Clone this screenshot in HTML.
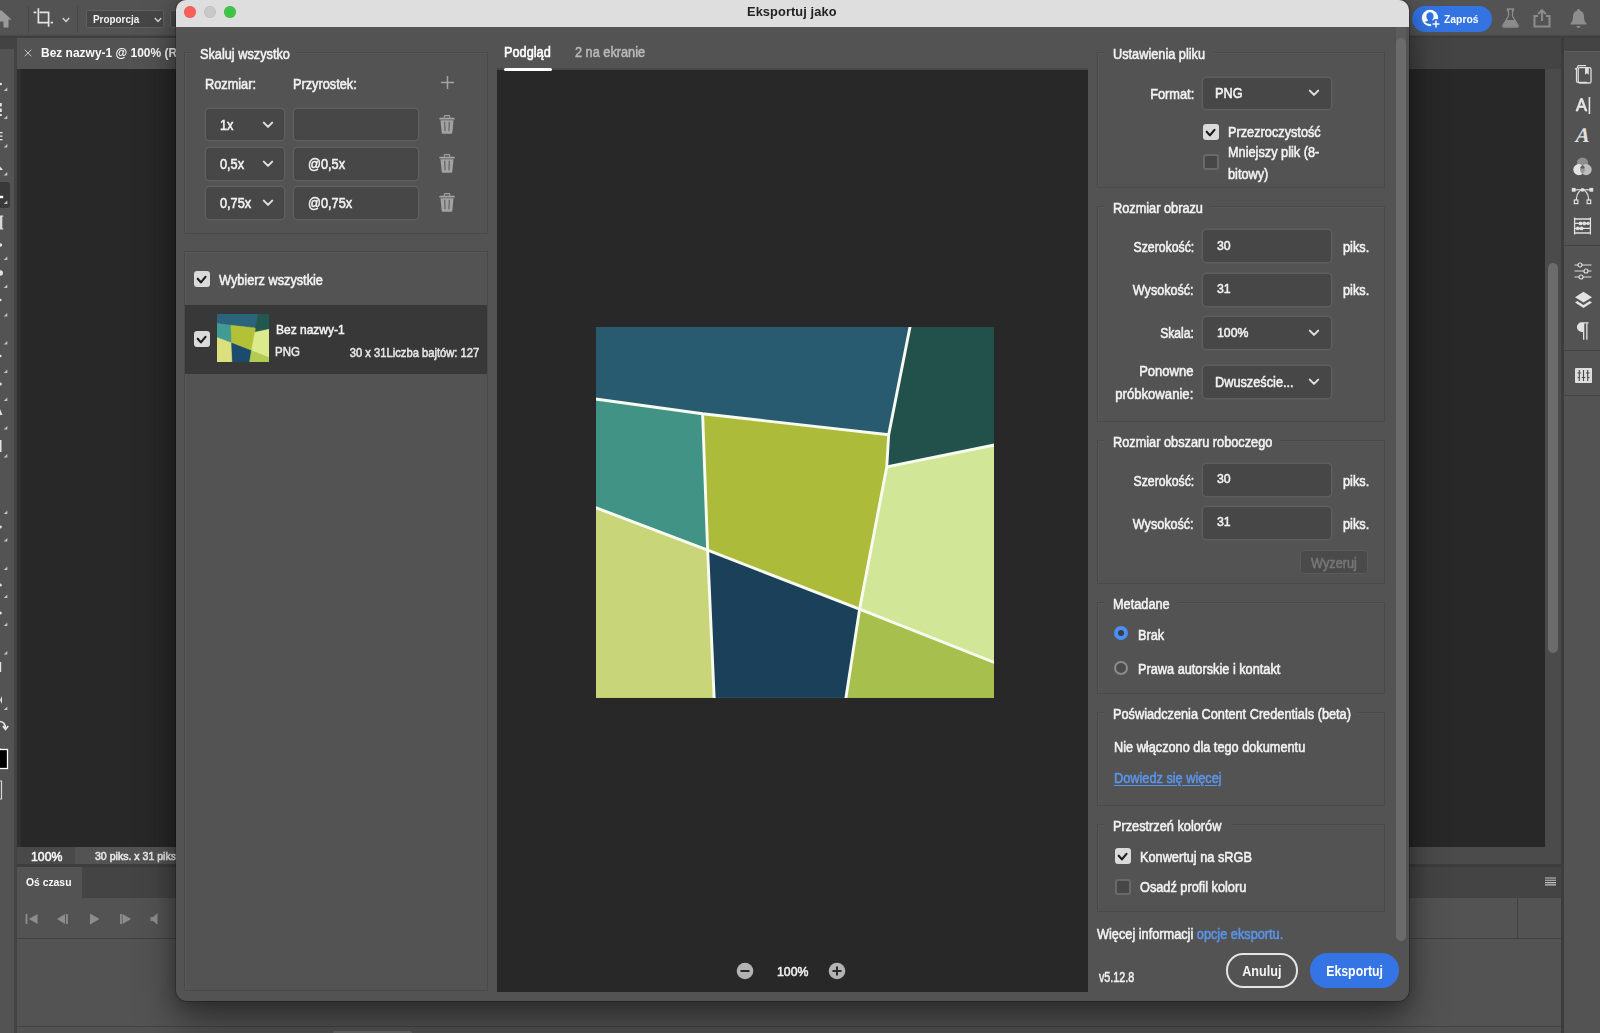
<!DOCTYPE html>
<html lang="pl">
<head>
<meta charset="utf-8">
<title>Eksportuj jako</title>
<style>
*{box-sizing:border-box;margin:0;padding:0}
html,body{width:1600px;height:1033px;overflow:hidden;background:#535353;font-family:"Liberation Sans",sans-serif;color:#f0f0f0}
.a{position:absolute}
.t{position:absolute;white-space:nowrap;font-size:14px;line-height:16px;transform:scaleX(.91);transform-origin:left center;color:#f2f2f2;-webkit-text-stroke:.55px currentColor}
.r{transform-origin:right center;text-align:right}
.b{font-weight:700;-webkit-text-stroke:0}
/* ---------- photoshop background ---------- */
#ps{position:absolute;left:0;top:0;width:1600px;height:1033px;overflow:hidden}
/* ---------- dialog ---------- */
#dlg{position:absolute;left:176px;top:0;width:1233px;height:1001px;background:#535353;border-radius:10px 10px 11px 11px;
 box-shadow:0 0 0 1px rgba(0,0,0,.2),0 22px 40px 0 rgba(0,0,0,.4),0 3px 16px 2px rgba(0,0,0,.2)}
#tb{position:absolute;left:0;top:0;width:100%;height:27px;background:#dedede;border-radius:10px 10px 0 0}
.tl{position:absolute;top:6px;width:12px;height:12px;border-radius:50%}
.fs{position:absolute;border:1px solid #4a4a4a;box-shadow:inset 1px 1px 0 rgba(255,255,255,.03)}
.lg{position:absolute;background:#535353;height:16px}
.box{position:absolute;background:#474747;box-shadow:0 0 0 1.500px #5e5e5e;border-radius:3.500px}
.cb{position:absolute;width:15.700px;height:16.400px;border-radius:3px}
.cb.on{background:#dadada}
.cb.off{background:#474747;border:2px solid #696969}
</style>
</head>
<body>
<div id="ps">
<!-- top options bar -->
<div class="a" style="left:0;top:0;width:1600px;height:37px;background:#535353"></div>
<div class="a" style="left:0;top:33.500px;width:1600px;height:2.500px;background:linear-gradient(#535353,#474747)"></div>
<div class="a" style="left:0;top:36px;width:1600px;height:2px;background:#3f3f3f"></div>
<!-- home icon (cropped) -->
<svg class="a" style="left:-10px;top:9px" width="22" height="20" viewBox="0 0 22 20"><path d="M11 1 L21.5 10.5 H18.5 V18.5 H13.5 V12.5 H8.5 V18.5 H3.5 V10.5 H0.5 Z" fill="#9b9b9b"/></svg>
<div class="a" style="left:28px;top:6px;width:1px;height:27px;background:#474747"></div>
<!-- crop icon -->
<svg class="a" style="left:33px;top:7px" width="21" height="21" viewBox="0 0 21 21" fill="none" stroke="#e4e4e4" stroke-width="1.700"><path d="M.6 5.400 H3.400"/><path d="M5.400 1.300 V15.600 H15.800"/><path d="M6.600 5.400 H15.600 V19.700"/><path d="M17.600 15.600 H20"/></svg>
<svg class="a" style="left:62px;top:17px" width="8" height="6" viewBox="0 0 8 6" fill="none" stroke="#d8d8d8" stroke-width="1.4"><path d="M.8 1 L4 4.4 L7.2 1"/></svg>
<div class="a" style="left:77px;top:6px;width:1px;height:27px;background:#474747"></div>
<div class="a" style="left:86px;top:10px;width:78px;height:18px;background:#464646;border:1px solid #606060;border-radius:2px"></div>
<div class="t b" style="left:93px;top:11px;font-size:11px;color:#f2f2f2;transform:scaleX(.9)">Proporcja</div>
<svg class="a" style="left:154px;top:16.5px" width="8" height="6" viewBox="0 0 8 6" fill="none" stroke="#d8d8d8" stroke-width="1.4"><path d="M.8 1 L4 4.4 L7.2 1"/></svg>
<div class="a" style="left:170px;top:10px;width:20px;height:18px;background:#464646;border:1px solid #606060;border-radius:2px"></div>
<!-- invite button + icons -->
<div class="a" style="left:1412px;top:6px;width:80px;height:26px;border-radius:13px;background:#3373e2"></div>
<svg class="a" style="left:1421px;top:9px" width="20" height="20" viewBox="0 0 20 20"><circle cx="9" cy="9" r="8.2" fill="#fff"/><path d="M9 3.2 c2.4 0 3.6 1.8 3.6 4 c0 1.700 -.8 3.100 -1.700 3.800 c.3 1 1.800 1.400 3.300 2.100 a8.200 8.200 0 0 1 -10.400 0 c1.500 -.7 3 -1.100 3.300 -2.100 c-.9 -.7 -1.700 -2.100 -1.700 -3.800 c0 -2.200 1.200 -4 3.600 -4z" fill="#3373e2"/><circle cx="15" cy="15" r="5" fill="#3373e2"/><path d="M15 11.600 v6.800 M11.600 15 h6.800" stroke="#fff" stroke-width="1.500"/></svg>
<div class="t b" style="left:1444px;top:10.500px;font-size:11.500px;color:#fff;transform:scaleX(.9)">Zaproś</div>
<svg class="a" style="left:1502px;top:8px" width="17" height="20" viewBox="0 0 17 20"><path d="M5.500 1 h6 v1.500 h-1 v5.500 l5.700 9.500 a1 1 0 0 1 -.9 1.500 h-13.600 a1 1 0 0 1 -.9 -1.500 l5.700 -9.500 v-5.500 h-1z" fill="none" stroke="#8b8b8b" stroke-width="1.300"/><path d="M4.300 12 h8.400 l3 5.600 a.8 .8 0 0 1 -.7 1.200 h-13 a.8 .8 0 0 1 -.7 -1.200z" fill="#8b8b8b"/></svg>
<svg class="a" style="left:1533px;top:8px" width="18" height="20" viewBox="0 0 18 20" fill="none" stroke="#8b8b8b" stroke-width="2.100"><path d="M5 8 H1.500 V18.500 H16.500 V8 H13"/><path d="M9 13 V2.500 M5.200 6 L9 2.200 L12.800 6"/></svg>
<svg class="a" style="left:1570px;top:8px" width="17" height="21" viewBox="0 0 17 21"><path d="M8.500 1 c.9 0 1.500 .6 1.500 1.500 c2.800 .8 4 3.200 4 6 c0 4 1 5.500 2.500 7 v1 h-16 v-1 c1.500 -1.500 2.500 -3 2.500 -7 c0 -2.800 1.200 -5.200 4 -6 c0 -.9 .6 -1.500 1.500 -1.500z" fill="#8e8e8e"/><path d="M6.500 18 h4 a2 2 0 0 1 -4 0z" fill="#8e8e8e"/></svg>
<!-- left toolbar -->
<div class="a" style="left:0;top:38px;width:14px;height:11px;background:#434343"></div>
<div class="a" style="left:0;top:49px;width:14px;height:984px;background:#535353"></div>
<div class="a" style="left:14px;top:38px;width:3px;height:995px;background:#434343"></div>
<!-- left tool fragments -->
<div class="a" style="left:0;top:182px;width:10px;height:26px;background:#393939;border-radius:0 3px 3px 0"></div>
<svg class="a" style="left:0;top:60px" width="14" height="760" viewBox="0 0 14 760"><g fill="#c4c4c4">
<path d="M7.300 27.500 v3.600 h-3.600z"/><path d="M7.300 55.500 v3.600 h-3.600z"/><path d="M7.300 84 v3.600 h-3.600z"/><path d="M7.300 112 v3.600 h-3.600z"/><path d="M7.300 140.500 v3.600 h-3.600z"/>
<path d="M7.300 196.500 v3.600 h-3.600z"/><path d="M7.300 224.500 v3.600 h-3.600z"/><path d="M7.300 253 v3.600 h-3.600z"/><path d="M7.300 281 v3.600 h-3.600z"/><path d="M7.300 309.500 v3.600 h-3.600z"/><path d="M7.300 337.500 v3.600 h-3.600z"/><path d="M7.300 366 v3.600 h-3.600z"/><path d="M7.300 394 v3.600 h-3.600z"/>
<path d="M7.300 450.500 v3.600 h-3.600z"/><path d="M7.300 478 v3.600 h-3.600z"/><path d="M7.300 506.500 v3.600 h-3.600z"/><path d="M7.300 534.500 v3.600 h-3.600z"/><path d="M7.300 562.500 v3.600 h-3.600z"/><path d="M7.300 591 v3.600 h-3.600z"/><path d="M7.300 646.500 v3.600 h-3.600z"/>
</g><g fill="#e2e2e2">
<circle cx=".8" cy="24" r="1.200"/>
<rect x="0" y="43" width="1.800" height="3.500"/><rect x="0" y="48.500" width="1.800" height="3.500"/><rect x="0" y="54" width="1.800" height="2"/>
<rect x="0" y="72" width="2.500" height="1.300"/><rect x="0" y="75.500" width="2.500" height="1.300"/><rect x="0" y="79" width="2.500" height="1.300"/>
<path d="M0 106.500 l3 3.500 h-3z"/>
<rect x="0" y="135.800" width="3.200" height="2.400" fill="#fff"/>
<path d="M0 155.500 h3.300 v1.300 h-1 v11.400 h1 v1.300 h-3.300z" fill="#d8d8d8"/>
<circle cx=".5" cy="185" r="1.700"/><circle cx=".3" cy="213" r="2.700"/><circle cx=".3" cy="240" r="1.300"/>
<circle cx=".3" cy="296" r="1.300"/><circle cx=".3" cy="324" r="1.500"/><path d="M0 349 l2.500 6 h-2.500z"/>
<rect x="0" y="380" width="1.500" height="12"/><circle cx=".3" cy="467" r="1.500"/><circle cx=".3" cy="525" r="1.500"/><circle cx=".3" cy="553" r="1.500"/>
<rect x="0" y="602" width="1.200" height="10"/><path d="M0 640 l2 -4 v8z"/><circle cx=".3" cy="690" r="1.500"/>
</g>
<path d="M0 661.500 q5.500 .5 5.500 7.500 M2.800 666 l2.700 3.500 l2.700 -3.500" fill="none" stroke="#e6e6e6" stroke-width="1.600"/>
<rect x="-3" y="689.500" width="10.500" height="19" fill="#000" stroke="#fff" stroke-width="1.300"/>
<path d="M0 721 h1.500 v18 h-1.500" fill="none" stroke="#d8d8d8" stroke-width="1.200"/>
</svg>

<!-- doc tab bar -->
<div class="a" style="left:17px;top:38px;width:1544px;height:31px;background:#444444"></div>
<div class="a" style="left:17px;top:38px;width:200px;height:30.500px;background:#535353"></div>
<svg class="a" style="left:24px;top:49px" width="8" height="8" viewBox="0 0 8 8" stroke="#c4c4c4" stroke-width="1"><path d="M.7 .7 L7.300 7.300 M7.300 .7 L.7 7.300"/></svg>
<div class="t b" style="left:41px;top:45px;font-size:12px;color:#fafafa;transform:scaleX(.998)">Bez nazwy-1 @ 100% (RGB/8)</div>
<!-- canvas -->
<div class="a" style="left:17px;top:68.500px;width:1528px;height:778.500px;background:#282828"></div>
<div class="a" style="left:17px;top:68.500px;width:4px;height:778.500px;background:#2f2f2f"></div>
<!-- vertical scrollbar -->
<div class="a" style="left:1545px;top:68.500px;width:16px;height:795.500px;background:#4b4b4b"></div>
<div class="a" style="left:1548px;top:263px;width:10px;height:390px;border-radius:5px;background:#6b6b6b"></div>
<div class="a" style="left:1561px;top:38px;width:3px;height:995px;background:#3c3c3c"></div>
<!-- right icon column -->
<div class="a" style="left:1564px;top:38px;width:36px;height:13px;background:#444444"></div>
<div class="a" style="left:1564px;top:51px;width:36px;height:982px;background:#535353;border-top:1px solid #5d5d5d"></div>
<div class="a" style="left:1564px;top:245px;width:36px;height:1px;background:#424242"></div>
<div class="a" style="left:1564px;top:350px;width:36px;height:1px;background:#424242"></div>
<div class="a" style="left:1564px;top:395px;width:36px;height:1px;background:#424242"></div>
<!-- right icons -->
<svg class="a" style="left:1574px;top:65px" width="19" height="19" viewBox="0 0 19 19" fill="none" stroke="#dedede" stroke-width="1.300"><path d="M3.500 3.300 V2 a1.300 1.300 0 0 1 1.300 -1.300 H12"/><path d="M1.300 4.500 a1.200 1.200 0 0 1 1.200 -1.200 h0 V16 a1.300 1.300 0 0 0 1.300 1.300 H13" stroke-width="1.200"/><rect x="4.200" y="2.700" width="12.800" height="15.300" rx="1.600"/><path d="M11 3 V9.800 L12.900 8.200 L14.800 9.800 V3z" fill="#dedede" stroke="none"/></svg>
<svg class="a" style="left:1575px;top:96px" width="16" height="19" viewBox="0 0 16 19"><path d="M1 15 L5.700 2.500 H7.300 L12 15 H10.300 L9 11.400 H4 L2.700 15z M4.500 10 H8.500 L6.500 4.400z" fill="#e4e4e4" stroke="#e4e4e4" stroke-width=".9"/><rect x="13.600" y="1" width="1.600" height="17" fill="#e4e4e4"/></svg>
<div class="a" style="left:1574px;top:124px;width:18px;height:22px;font-family:'Liberation Serif',serif;font-style:italic;font-weight:700;font-size:21px;line-height:22px;color:#e0e0e0;text-align:center;transform:skewX(-3deg)">A</div>
<svg class="a" style="left:1573px;top:156.500px" width="19" height="19" viewBox="0 0 19 19"><circle cx="9.500" cy="6" r="5.600" fill="#8e8e8e"/><circle cx="5.900" cy="12.600" r="5.600" fill="#e3e3e3"/><circle cx="13.100" cy="12.600" r="5.600" fill="#bdbdbd"/><path d="M9.500 8 a5.600 5.600 0 0 1 0 9.200 a5.600 5.600 0 0 1 0 -9.200z" fill="#9a9a9a"/><path d="M9.500 8 q2 1.400 2.300 3.100 q-2.300 1.100 -4.600 0 q.3 -1.700 2.300 -3.100z" fill="#5e5e5e"/></svg>
<svg class="a" style="left:1571px;top:187px" width="23" height="18" viewBox="0 0 23 18" fill="none" stroke="#e0e0e0" stroke-width="1.200"><path d="M2.500 2.800 H20.500"/><path d="M5.200 13 C5.500 6 9 3 11.500 3 C14 3 17.500 6 17.800 13"/><rect x=".8" y=".9" width="3.800" height="3.800" fill="#e0e0e0" stroke="none"/><rect x="18.400" y=".9" width="3.800" height="3.800" fill="#e0e0e0" stroke="none"/><circle cx="11.500" cy="2.800" r="1.900" fill="#e0e0e0" stroke="none"/><rect x="3.300" y="13" width="3.600" height="3.600" fill="#535353"/><rect x="16.100" y="13" width="3.600" height="3.600" fill="#535353"/></svg>
<svg class="a" style="left:1573px;top:217px" width="19" height="18" viewBox="0 0 19 18" fill="none" stroke="#e0e0e0" stroke-width="1.300"><path d="M1.600 .5 V17.500 M17.400 .5 V17.500 M1.600 2 H17.400 M1.600 16 H17.400 M1.600 6.400 H17.400 M1.600 11.400 H17.400"/><g fill="#e0e0e0" stroke="none"><circle cx="7.500" cy="6.400" r="1.900"/><circle cx="11.300" cy="6.400" r="1.900"/><circle cx="15" cy="6.400" r="1.700"/><circle cx="4.800" cy="11.400" r="1.900"/><circle cx="8.600" cy="11.400" r="1.900"/></g></svg>
<svg class="a" style="left:1574px;top:262px" width="18" height="18" viewBox="0 0 18 18" fill="none" stroke="#dcdcdc" stroke-width="1.200"><path d="M.5 3 H4 M8 3 H17.500 M.5 9 H10 M14 9 H17.500 M.5 15 H5 M9 15 H17.500"/><circle cx="6" cy="3" r="2"/><circle cx="12" cy="9" r="2"/><circle cx="7" cy="15" r="2"/></svg>
<svg class="a" style="left:1573.500px;top:290.500px" width="19" height="19" viewBox="0 0 19 19"><path d="M9.500 .8 L18 6.200 L9.500 11.600 L1 6.200z" fill="#e2e2e2"/><path d="M3.300 10 L1 11.500 L9.500 17 L18 11.500 L15.700 10 L9.500 14z" fill="#e2e2e2"/></svg>
<svg class="a" style="left:1576px;top:322px" width="13" height="18" viewBox="0 0 13 18"><path d="M5.800 .3 H12.500 V1.600 H11.500 V17.700 H10.200 V1.600 H8.300 V17.700 H7 V10 H5.800 a4.850 4.850 0 0 1 0 -9.700z" fill="#e2e2e2"/></svg>
<svg class="a" style="left:1574.500px;top:367.500px" width="17" height="15" viewBox="0 0 17 15"><rect x="0" y="0" width="17" height="15" rx=".8" fill="#dedede"/><g stroke="#4a4a4a" stroke-width="1.100" fill="none"><path d="M4.300 2 V13 M8.500 2 V13 M12.700 2 V13 M2.500 5 H6 M6.800 9.500 H10.300 M11 5 H14.500 M2.500 9.500 H4 M13 9.500 H14.500"/></g></svg>

<!-- status bar -->
<div class="a" style="left:17px;top:847px;width:1528px;height:17px;background:#535353"></div>
<div class="a" style="left:300px;top:847px;width:1245px;height:17px;background:#4b4b4b"></div>
<div class="a" style="left:17px;top:847px;width:58px;height:17px;background:#494949"></div>
<div class="t" style="left:31px;top:849px;font-size:12.3px;color:#f4f4f4;transform:scaleX(.999)">100%</div>
<div class="t" style="left:95px;top:848px;font-size:11px;color:#e6e6e6;transform:scaleX(.96)">30 piks. x 31 piks. (72 ppi)</div>
<!-- timeline panel -->
<div class="a" style="left:17px;top:864px;width:1544px;height:3px;background:#3d3d3d"></div>
<div class="a" style="left:17px;top:867px;width:1544px;height:31px;background:#444444"></div>
<div class="a" style="left:17px;top:867px;width:65px;height:31px;background:#535353"></div>
<div class="a" style="left:17px;top:898px;width:1544px;height:135px;background:#535353"></div>
<div class="a" style="left:17px;top:867px;width:65px;height:31px;background:#535353"></div>
<div class="t b" style="left:25.500px;top:874px;font-size:11.500px;color:#fafafa;transform:scaleX(.9)">Oś czasu</div>
<div class="a" style="left:17px;top:938px;width:1544px;height:1px;background:#414141"></div>
<div class="a" style="left:1517px;top:897px;width:1px;height:41px;background:#414141"></div>
<div class="a" style="left:17px;top:1026px;width:1544px;height:1px;background:#434343"></div>
<div class="a" style="left:333px;top:1030.500px;width:79px;height:4px;background:#6a6a6a;border-radius:2px 2px 0 0"></div>
<svg class="a" style="left:1545px;top:877px" width="11" height="9" viewBox="0 0 11 9" stroke="#c2c2c2" stroke-width="1.100"><path d="M0 1 h11 M0 3.300 h11 M0 5.600 h11 M0 7.900 h11"/></svg>
<!-- timeline controls -->
<svg class="a" style="left:24px;top:912px" width="140" height="14" viewBox="0 0 140 14" fill="#8d8d8d"><rect x="1.600" y="2" width="1.800" height="10"/><path d="M13.500 2 V12 L5 7z"/><path d="M41 2 V12 L33 7z"/><rect x="42" y="2" width="1.800" height="10"/><path d="M66 1.500 V12.500 L75.500 7z"/><rect x="96" y="2" width="1.800" height="10"/><path d="M98.500 2 V12 L107 7z"/><path d="M126.500 5 h2.500 l4.500 -3.800 v11.600 l-4.500 -3.800 h-2.500z"/></svg>

</div>
<div id="dlg">
<div id="tb"></div>
<!--DLGSTART-->
<div class="tl" style="left:8px;background:#fb6058;box-shadow:inset 0 0 0 .5px rgba(0,0,0,.12)"></div>
<div class="tl" style="left:28px;background:#c8c8c8;box-shadow:inset 0 0 0 .5px rgba(0,0,0,.08)"></div>
<div class="tl" style="left:48px;background:#3fc546;box-shadow:inset 0 0 0 .5px rgba(0,0,0,.12)"></div>
<div class="t b" style="left:571px;top:4px;font-size:13px;color:#222;transform:scaleX(.985);letter-spacing:.1px">Eksportuj jako</div>
<div class="fs" style="left:7.5px;top:52.3px;width:304px;height:181.7px"></div>
<div class="lg" style="left:16.25px;top:45px;width:105px"></div>
<div class="t " style="left:24.45px;top:46.3px;">Skaluj wszystko</div>
<div class="t " style="left:28.7px;top:76px;">Rozmiar:</div>
<div class="t " style="left:117px;top:76px;">Przyrostek:</div>
<svg class="a" style="left:265px;top:75.500px" width="13" height="13" viewBox="0 0 13 13" stroke="#a4a4a4" stroke-width="1.500"><path d="M6.500 0 V13 M0 6.500 H13"/></svg>
<div class="box" style="left:30.3px;top:108.9px;width:77.7px;height:31.6px"></div>
<div class="box" style="left:118.3px;top:108.9px;width:123.5px;height:31.6px"></div>
<div class="t " style="left:44px;top:116.7px;">1x</div>
<svg class="a" style="left:85.5px;top:121.2px" width="12" height="8" viewBox="0 0 12 8" fill="none" stroke="#e0e0e0" stroke-width="2" stroke-linecap="round" stroke-linejoin="round"><path d="M1.800 1.600 L6 5.900 L10.200 1.600"/></svg>
<svg class="a" style="left:263px;top:114.9px" width="16" height="19.200" preserveAspectRatio="none" viewBox="0 0 16 20"><path d="M5.300 2.800 V1.500 q0 -.8 .8 -.8 h3.800 q.8 0 .8 .8 V2.800" fill="none" stroke="#a2a2a2" stroke-width="1.200"/><rect x=".4" y="2.800" width="15.200" height="2" rx=".5" fill="#a6a6a6"/><path d="M1.500 5.600 H14.500 L13.300 18.600 q-.1 .9 -1 .9 H3.700 q-.9 0 -1 -.9z" fill="#a2a2a2"/><path d="M5.700 7 L6.100 17 M10.300 7 L9.900 17" stroke="#686868" stroke-width="1.300" fill="none"/></svg>
<div class="box" style="left:30.3px;top:147.95px;width:77.7px;height:31.6px"></div>
<div class="box" style="left:118.3px;top:147.95px;width:123.5px;height:31.6px"></div>
<div class="t " style="left:44px;top:155.75px;">0,5x</div>
<div class="t " style="left:132px;top:155.75px;">@0,5x</div>
<svg class="a" style="left:85.5px;top:160.25px" width="12" height="8" viewBox="0 0 12 8" fill="none" stroke="#e0e0e0" stroke-width="2" stroke-linecap="round" stroke-linejoin="round"><path d="M1.800 1.600 L6 5.900 L10.200 1.600"/></svg>
<svg class="a" style="left:263px;top:153.95px" width="16" height="19.200" preserveAspectRatio="none" viewBox="0 0 16 20"><path d="M5.300 2.800 V1.500 q0 -.8 .8 -.8 h3.800 q.8 0 .8 .8 V2.800" fill="none" stroke="#a2a2a2" stroke-width="1.200"/><rect x=".4" y="2.800" width="15.200" height="2" rx=".5" fill="#a6a6a6"/><path d="M1.500 5.600 H14.500 L13.300 18.600 q-.1 .9 -1 .9 H3.700 q-.9 0 -1 -.9z" fill="#a2a2a2"/><path d="M5.700 7 L6.100 17 M10.300 7 L9.900 17" stroke="#686868" stroke-width="1.300" fill="none"/></svg>
<div class="box" style="left:30.3px;top:187.0px;width:77.7px;height:31.6px"></div>
<div class="box" style="left:118.3px;top:187.0px;width:123.5px;height:31.6px"></div>
<div class="t " style="left:44px;top:194.8px;">0,75x</div>
<div class="t " style="left:132px;top:194.8px;">@0,75x</div>
<svg class="a" style="left:85.5px;top:199.3px" width="12" height="8" viewBox="0 0 12 8" fill="none" stroke="#e0e0e0" stroke-width="2" stroke-linecap="round" stroke-linejoin="round"><path d="M1.800 1.600 L6 5.900 L10.200 1.600"/></svg>
<svg class="a" style="left:263px;top:193.0px" width="16" height="19.200" preserveAspectRatio="none" viewBox="0 0 16 20"><path d="M5.300 2.800 V1.500 q0 -.8 .8 -.8 h3.800 q.8 0 .8 .8 V2.800" fill="none" stroke="#a2a2a2" stroke-width="1.200"/><rect x=".4" y="2.800" width="15.200" height="2" rx=".5" fill="#a6a6a6"/><path d="M1.500 5.600 H14.500 L13.300 18.600 q-.1 .9 -1 .9 H3.700 q-.9 0 -1 -.9z" fill="#a2a2a2"/><path d="M5.700 7 L6.100 17 M10.300 7 L9.900 17" stroke="#686868" stroke-width="1.300" fill="none"/></svg>
<div class="fs" style="left:7.5px;top:251.3px;width:304px;height:740.2px"></div>
<div class="cb on" style="left:18px;top:271px"><svg class="a" style="left:0;top:0" width="16" height="16.400" viewBox="0 0 16 16.400" fill="none" stroke="#1c1c1c" stroke-width="2.100" stroke-linecap="round" stroke-linejoin="round"><path d="M3.700 7.700 L6.900 11.400 L11.500 5.800"/></svg></div>
<div class="t " style="left:43.25px;top:272px;">Wybierz wszystkie</div>
<div class="a" style="left:9px;top:305px;width:302px;height:69px;background:#383838"></div>
<div class="cb on" style="left:18px;top:331px"><svg class="a" style="left:0;top:0" width="16" height="16.400" viewBox="0 0 16 16.400" fill="none" stroke="#1c1c1c" stroke-width="2.100" stroke-linecap="round" stroke-linejoin="round"><path d="M3.700 7.700 L6.900 11.400 L11.500 5.800"/></svg></div>
<svg class="a" style="left:41px;top:314.3px;" width="52" height="48.2" viewBox="40 44 1028 956" preserveAspectRatio="none"><g style="filter:blur(6px)"><rect x="-20" y="-20" width="1150" height="1080" fill="#7f9a68"/><polygon points="40,44 850,44 795,322 315,268 40,230" fill="#2a647c" stroke="#2a647c" stroke-width="10"/><polygon points="850,44 1068,44 1068,348 790,405 795,322" fill="#22594f" stroke="#22594f" stroke-width="10"/><polygon points="40,230 315,268 328,620 40,510" fill="#3f9b93" stroke="#3f9b93" stroke-width="10"/><polygon points="315,268 795,322 790,405 720,772 328,620" fill="#b2c136" stroke="#b2c136" stroke-width="10"/><polygon points="790,405 1068,348 1068,910 720,772" fill="#dcea8e" stroke="#dcea8e" stroke-width="10"/><polygon points="40,510 328,620 345,1000 40,1000" fill="#dbe07c" stroke="#dbe07c" stroke-width="10"/><polygon points="328,620 720,772 685,1000 345,1000" fill="#1c4b6e" stroke="#1c4b6e" stroke-width="10"/><polygon points="720,772 1068,910 1068,1000 685,1000" fill="#b3cb52" stroke="#b3cb52" stroke-width="10"/></g></svg>
<div class="t " style="left:99.5px;top:322px;font-size:13.2px;">Bez nazwy-1</div>
<div class="t " style="left:98.7px;top:344.3px;font-size:12.6px;color:#e8e8e8;">PNG</div>
<div class="t r" style="right:929.5px;top:344.5px;font-size:12.300px;color:#e6e6e6">30 x 31Liczba bajtów: 127</div>
<div class="t " style="left:328.25px;top:44px;color:#fff;">Podgląd</div>
<div class="t " style="left:399px;top:44px;color:#b8b8b8;">2 na ekranie</div>
<div class="a" style="left:321px;top:68px;width:591px;height:2px;background:#484848"></div>
<div class="a" style="left:321px;top:70px;width:591px;height:922px;background:#282828"></div>
<div class="a" style="left:328px;top:67.500px;width:47.500px;height:3px;border-radius:1.500px;background:#fff"></div>
<svg class="a" style="left:419.5px;top:327px;" width="398.5" height="370.5" viewBox="40 44 1028 956" preserveAspectRatio="none"><g style="filter:blur(2px)"><rect x="-20" y="-20" width="1150" height="1080" fill="#8aa060"/><polygon points="40,44 850,44 795,322 315,268 40,230" fill="#285a70" stroke="#285a70" stroke-width="2"/><polygon points="850,44 1068,44 1068,348 790,405 795,322" fill="#22514b" stroke="#22514b" stroke-width="2"/><polygon points="40,230 315,268 328,620 40,510" fill="#419485" stroke="#419485" stroke-width="2"/><polygon points="315,268 795,322 790,405 720,772 328,620" fill="#adbb3a" stroke="#adbb3a" stroke-width="2"/><polygon points="790,405 1068,348 1068,910 720,772" fill="#d2e698" stroke="#d2e698" stroke-width="2"/><polygon points="40,510 328,620 345,1000 40,1000" fill="#c9d579" stroke="#c9d579" stroke-width="2"/><polygon points="328,620 720,772 685,1000 345,1000" fill="#1a405a" stroke="#1a405a" stroke-width="2"/><polygon points="720,772 1068,910 1068,1000 685,1000" fill="#a7c04d" stroke="#a7c04d" stroke-width="2"/><g fill="none" stroke="#f8fcf0" stroke-width="7.5" stroke-linejoin="round"><path d="M851 39 L795 322 L790 405 L720 772 L684 1006"/><path d="M34 229 L315 268 L795 322"/><path d="M790 405 L1074 347"/><path d="M315 268 L328 620 L345 1006"/><path d="M34 508 L328 620 L720 772 L1074 912"/></g></g></svg>
<svg class="a" style="left:560.300px;top:961.800px" width="18" height="18" viewBox="0 0 18 18"><circle cx="9" cy="9" r="8.300" fill="#b3b3b3"/><rect x="4.500" y="8" width="9" height="2" fill="#2a2a2a"/></svg>
<svg class="a" style="left:652.100px;top:961.800px" width="18" height="18" viewBox="0 0 18 18"><circle cx="9" cy="9" r="8.300" fill="#b3b3b3"/><rect x="4.500" y="8" width="9" height="2" fill="#2a2a2a"/><rect x="8" y="4.500" width="2" height="9" fill="#2a2a2a"/></svg>
<div class="t " style="left:600.5px;top:964px;font-size:13.5px;">100%</div>
<div class="fs" style="left:920.5px;top:52.3px;width:288px;height:135.7px"></div>
<div class="lg" style="left:929.25px;top:45px;width:109px"></div>
<div class="t " style="left:937.45px;top:46.3px;">Ustawienia pliku</div>
<div class="t r" style="right:215.25px;top:85.75px;transform:scaleX(0.914);">Format:</div>
<div class="box" style="left:1027px;top:77.5px;width:128px;height:31.5px"></div>
<div class="t " style="left:1038.5px;top:85px;">PNG</div>
<svg class="a" style="left:1131.75px;top:89px" width="12" height="8" viewBox="0 0 12 8" fill="none" stroke="#e0e0e0" stroke-width="2" stroke-linecap="round" stroke-linejoin="round"><path d="M1.800 1.600 L6 5.900 L10.200 1.600"/></svg>
<div class="cb on" style="left:1027px;top:124px"><svg class="a" style="left:0;top:0" width="16" height="16.400" viewBox="0 0 16 16.400" fill="none" stroke="#1c1c1c" stroke-width="2.100" stroke-linecap="round" stroke-linejoin="round"><path d="M3.700 7.700 L6.900 11.400 L11.500 5.800"/></svg></div>
<div class="t " style="left:1051.7px;top:123.6px;">Przezroczystość</div>
<div class="cb off" style="left:1027px;top:153.5px"></div>
<div class="t " style="left:1052px;top:144px;">Mniejszy plik (8-</div>
<div class="t " style="left:1052px;top:165.75px;">bitowy)</div>
<div class="fs" style="left:920.5px;top:206.3px;width:288px;height:215.7px"></div>
<div class="lg" style="left:929.25px;top:199px;width:105px"></div>
<div class="t " style="left:937.45px;top:200.3px;">Rozmiar obrazu</div>
<div class="t r" style="right:215.25px;top:239px;transform:scaleX(0.877);">Szerokość:</div>
<div class="box" style="left:1027px;top:230px;width:128px;height:32px"></div>
<div class="t " style="left:1041px;top:237.5px;font-size:13.5px;">30</div>
<div class="t " style="left:1166.5px;top:239px;">piks.</div>
<div class="t r" style="right:215.25px;top:282px;transform:scaleX(0.899);">Wysokość:</div>
<div class="box" style="left:1027px;top:273.5px;width:128px;height:32px"></div>
<div class="t " style="left:1041px;top:281px;font-size:13.5px;">31</div>
<div class="t " style="left:1166.5px;top:282px;">piks.</div>
<div class="t r" style="right:215.25px;top:325px;transform:scaleX(0.867);">Skala:</div>
<div class="box" style="left:1027px;top:316.5px;width:128px;height:32px"></div>
<div class="t " style="left:1041px;top:324.5px;font-size:13.5px;">100%</div>
<svg class="a" style="left:1131.75px;top:329px" width="12" height="8" viewBox="0 0 12 8" fill="none" stroke="#e0e0e0" stroke-width="2" stroke-linecap="round" stroke-linejoin="round"><path d="M1.800 1.600 L6 5.900 L10.200 1.600"/></svg>
<div class="t r" style="right:215.25px;top:363px;transform:scaleX(0.929);">Ponowne</div>
<div class="t r" style="right:215.25px;top:385.75px;transform:scaleX(0.937);">próbkowanie:</div>
<div class="box" style="left:1027px;top:365.5px;width:128px;height:32px"></div>
<div class="t " style="left:1038.5px;top:373.5px;">Dwuszeście...</div>
<svg class="a" style="left:1131.75px;top:378px" width="12" height="8" viewBox="0 0 12 8" fill="none" stroke="#e0e0e0" stroke-width="2" stroke-linecap="round" stroke-linejoin="round"><path d="M1.800 1.600 L6 5.900 L10.200 1.600"/></svg>
<div class="fs" style="left:920.5px;top:440.3px;width:288px;height:143.7px"></div>
<div class="lg" style="left:929.25px;top:433px;width:174.25px"></div>
<div class="t " style="left:937.45px;top:434.3px;">Rozmiar obszaru roboczego</div>
<div class="t r" style="right:215.25px;top:472.75px;transform:scaleX(0.877);">Szerokość:</div>
<div class="box" style="left:1027px;top:464px;width:128px;height:32px"></div>
<div class="t " style="left:1041px;top:471px;font-size:13.5px;">30</div>
<div class="t " style="left:1166.5px;top:472.75px;">piks.</div>
<div class="t r" style="right:215.25px;top:516px;transform:scaleX(0.899);">Wysokość:</div>
<div class="box" style="left:1027px;top:506.7px;width:128px;height:32px"></div>
<div class="t " style="left:1041px;top:514px;font-size:13.5px;">31</div>
<div class="t " style="left:1166.5px;top:516px;">piks.</div>
<div class="a" style="left:1123.500px;top:550px;width:68px;height:23.500px;background:#4a4a4a;border:1px solid #5b5b5b;border-radius:3.500px"></div>
<div class="t " style="left:1134.5px;top:554.5px;color:#777;">Wyzeruj</div>
<div class="fs" style="left:920.5px;top:602.3px;width:288px;height:91.7px"></div>
<div class="lg" style="left:929.25px;top:595px;width:73px"></div>
<div class="t " style="left:937.45px;top:596.3px;">Metadane</div>
<div class="a" style="left:937.750px;top:626.250px;width:14px;height:14px;border-radius:50%;background:#3d3d3d;border:4.200px solid #4b8ef7"></div>
<div class="t " style="left:962px;top:626.5px;">Brak</div>
<div class="a" style="left:937.750px;top:660.500px;width:14px;height:14px;border-radius:50%;background:#4b4b4b;border:2px solid #8c8c8c"></div>
<div class="t " style="left:962px;top:661px;">Prawa autorskie i kontakt</div>
<div class="fs" style="left:920.5px;top:712.3px;width:288px;height:94.2px"></div>
<div class="lg" style="left:929.25px;top:705px;width:252.75px"></div>
<div class="t " style="left:937.45px;top:706.3px;">Poświadczenia Content Credentials (beta)</div>
<div class="t " style="left:937.75px;top:739px;">Nie włączono dla tego dokumentu</div>
<div class="t " style="left:937.75px;top:770px;color:#5b94e8;text-decoration:underline;text-underline-offset:2px;">Dowiedz się więcej</div>
<div class="fs" style="left:920.5px;top:824.3px;width:288px;height:87.7px"></div>
<div class="lg" style="left:929.25px;top:817px;width:125.5px"></div>
<div class="t " style="left:937.45px;top:818.3px;">Przestrzeń kolorów</div>
<div class="cb on" style="left:939px;top:848px"><svg class="a" style="left:0;top:0" width="16" height="16.400" viewBox="0 0 16 16.400" fill="none" stroke="#1c1c1c" stroke-width="2.100" stroke-linecap="round" stroke-linejoin="round"><path d="M3.700 7.700 L6.900 11.400 L11.500 5.800"/></svg></div>
<div class="t " style="left:963.5px;top:848.5px;">Konwertuj na sRGB</div>
<div class="cb off" style="left:939px;top:878.5px"></div>
<div class="t " style="left:963.5px;top:879px;">Osadź profil koloru</div>
<div class="t " style="left:921px;top:925.75px;">Więcej informacji <span style="color:#5b94e8">opcje eksportu.</span></div>
<div class="t " style="left:922.75px;top:968.5px;font-size:14.3px;color:#f0f0f0;transform:scaleX(.75);">v5.12.8</div>
<div class="a" style="left:1049.750px;top:953.250px;width:71.750px;height:34.250px;border:2.300px solid #e4e4e4;border-radius:17.200px"></div>
<div class="t b" style="left:1049.750px;top:962.500px;width:71.750px;text-align:center;transform:scaleX(.9);transform-origin:center;color:#f4f4f4">Anuluj</div>
<div class="a" style="left:1134px;top:953.250px;width:89.250px;height:34.250px;background:#3574e4;border-radius:17.200px"></div>
<div class="t b" style="left:1134px;top:962.500px;width:89.250px;text-align:center;transform:scaleX(.88);transform-origin:center;color:#fff">Eksportuj</div>
<div class="a" style="left:1219.500px;top:27px;width:10.500px;height:914px;background:#5c5c5c;border-radius:0 0 5px 5px"></div>
<div class="a" style="left:1219.500px;top:37.500px;width:10.500px;height:903.500px;background:#6b6b6b;border-radius:5.250px"></div>
<!--DLGEND-->
</div>
</body>
</html>
